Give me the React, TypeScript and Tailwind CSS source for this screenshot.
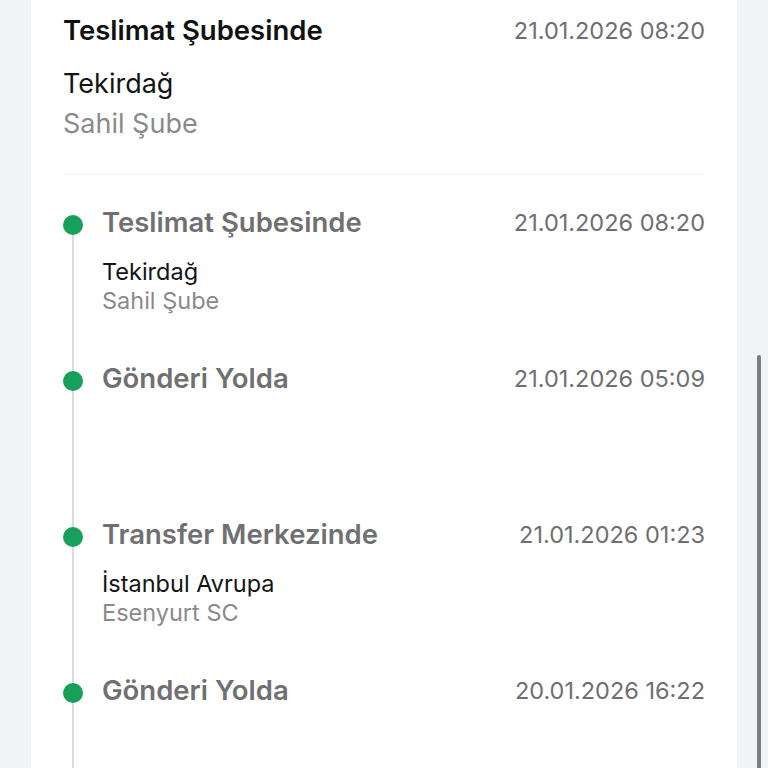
import React from "react";

type Item = { title: string; date: string; city?: string; branch?: string };

const items: Item[] = [
  { title: "Teslimat Şubesinde", date: "21.01.2026 08:20", city: "Tekirdağ", branch: "Sahil Şube" },
  { title: "Gönderi Yolda", date: "21.01.2026 05:09" },
  { title: "Transfer Merkezinde", date: "21.01.2026 01:23", city: "İstanbul Avrupa", branch: "Esenyurt SC" },
  { title: "Gönderi Yolda", date: "20.01.2026 16:22" },
];

export default function App() {
  return (
    <div
      className="relative h-[768px] overflow-hidden bg-[#f2f3f5] flex"
      style={{ fontFamily: "Inter, 'Noto Sans', sans-serif" }}
    >
      <div className="ml-[31px] w-[706px] bg-white px-8 flex flex-col">
        {/* header */}
        <div className="pt-[13px] pb-[30px] border-b border-[#f1f1f1]">
          <div className="flex items-center justify-between h-[36px]">
            <span className="text-[27.5px] font-semibold text-[#111111]">Teslimat Şubesinde</span>
            <span className="text-[23.5px] text-[#6f6f72]">21.01.2026 08:20</span>
          </div>
          <div className="mt-[15px] text-[27px] leading-[40px] text-[#141414]">Tekirdağ</div>
          <div className="text-[27px] leading-[40px] text-[#8a8a8d]">Sahil Şube</div>
        </div>

        {/* timeline */}
        <div className="relative pt-[32px]">
          <div className="absolute left-[9px] top-[50px] bottom-0 w-[2px] bg-[#dcdcdc]" />
          {items.map((it, i) => (
            <div key={i} className="relative flex h-[156px]">
              <div className="w-5 shrink-0">
                <div className="mt-[8px] h-5 w-5 rounded-full bg-[#17a05a]" />
              </div>
              <div className="ml-[19px] flex-1">
                <div className="flex items-center justify-between h-[32px]">
                  <span className="text-[27.5px] font-semibold text-[#707072]">{it.title}</span>
                  <span className="text-[23.5px] text-[#6f6f72]">{it.date}</span>
                </div>
                {it.city && (
                  <div className="mt-[18px]">
                    <div className="text-[23.5px] leading-[29px] text-[#141414]">{it.city}</div>
                    <div className="text-[23.5px] leading-[29px] text-[#8a8a8d]">{it.branch}</div>
                  </div>
                )}
              </div>
            </div>
          ))}
        </div>
      </div>
      <div className="absolute left-[757px] top-[355px] h-[430px] w-[4px] rounded-full bg-[#7d7d80]" />
    </div>
  );
}
